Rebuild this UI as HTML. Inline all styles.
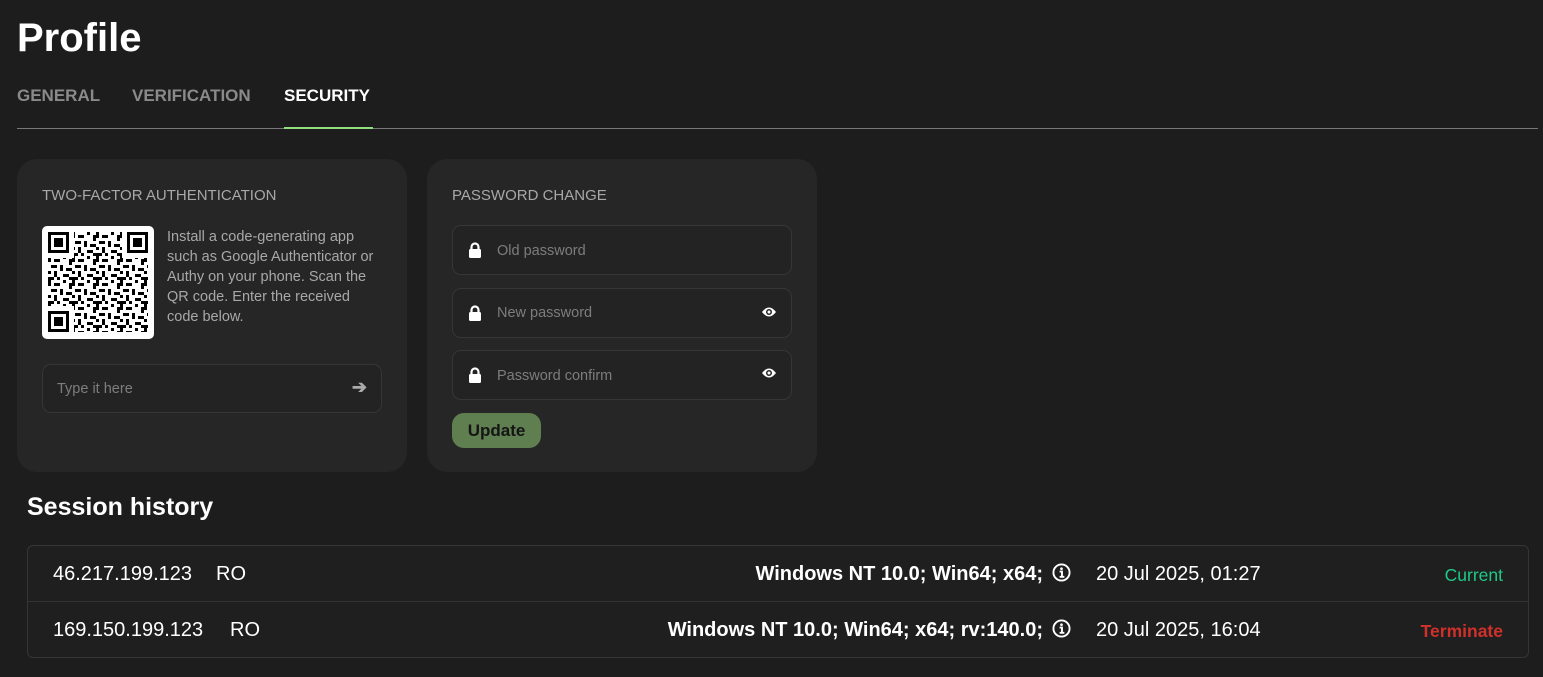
<!DOCTYPE html>
<html><head><meta charset="utf-8"><style>
*{margin:0;padding:0;box-sizing:border-box}
body{width:1543px;height:677px;background:#1d1d1d;font-family:"Liberation Sans",Arial,sans-serif;color:#fff;position:relative;overflow:hidden}
.abs{position:absolute}
h1{position:absolute;left:17px;top:16px;font-size:40px;font-weight:bold}
.tab{position:absolute;top:86px;font-size:17px;font-weight:bold;color:#8a8a8a}
.card{position:absolute;top:159px;width:390px;height:313px;background:#262626;border-radius:20px}
.ch{position:absolute;left:25px;top:28px;font-size:15px;color:#a8a8a8}
.inp{position:absolute;border:1px solid #363636;border-radius:9px;background:#232323}
.ph{position:absolute;font-size:14.5px;color:#7d7d7d}
.row{position:absolute;left:0;right:0;height:56px;font-size:20px}
.row span{position:absolute;top:17px}
</style></head><body>
<h1>Profile</h1>
<div class="tab" style="left:17px">GENERAL</div>
<div class="tab" style="left:132px">VERIFICATION</div>
<div class="tab" style="left:284px;color:#fff">SECURITY</div>
<div class="abs" style="left:17px;top:128px;width:1521px;height:1px;background:#777"></div>
<div class="abs" style="left:284px;top:127px;width:89px;height:2px;background:#8fdf80"></div>

<div class="card" style="left:17px">
<div class="ch">TWO-FACTOR AUTHENTICATION</div>
<div class="abs" style="left:25px;top:67px;width:112px;height:113px;background:#fff;border-radius:5px">
<svg width="112" height="113" viewBox="0 0 112 113">
<defs><pattern id="q" width="24" height="24" patternUnits="userSpaceOnUse" x="6" y="6">
<rect x="0" y="0" width="3" height="6"/><rect x="6" y="3" width="6" height="3"/><rect x="15" y="0" width="3" height="3"/><rect x="21" y="3" width="3" height="6"/>
<rect x="3" y="9" width="6" height="3"/><rect x="12" y="9" width="3" height="6"/><rect x="18" y="12" width="6" height="3"/>
<rect x="0" y="15" width="3" height="3"/><rect x="6" y="15" width="3" height="6"/><rect x="15" y="18" width="6" height="3"/>
<rect x="0" y="21" width="6" height="3"/><rect x="9" y="21" width="3" height="3"/><rect x="21" y="21" width="3" height="3"/><rect x="9" y="3" width="3" height="3"/>
</pattern></defs>
<rect x="6" y="6" width="100" height="100" fill="url(#q)"/>
<g fill="#fff"><rect x="5" y="5" width="27" height="27"/><rect x="80" y="5" width="27" height="27"/><rect x="5" y="80" width="27" height="27"/></g>
<g fill="none" stroke="#000" stroke-width="3"><rect x="7.5" y="7.5" width="18" height="18"/><rect x="86.5" y="7.5" width="18" height="18"/><rect x="7.5" y="86.5" width="18" height="18"/></g>
<g fill="#000"><rect x="12" y="12" width="9" height="9"/><rect x="91" y="12" width="9" height="9"/><rect x="12" y="91" width="9" height="9"/></g>
</svg></div>
<div class="abs" style="left:150px;top:68px;font-size:14.5px;line-height:20px;color:#a8a8a8;width:216px">Install a code-generating app such as Google Authenticator or Authy on your phone. Scan the QR code. Enter the received code below.</div>
<div class="inp" style="left:25px;top:205px;width:340px;height:49px"><div class="ph" style="left:14px;top:16px">Type it here</div><div class="abs" style="right:14px;top:12px;font-size:18px;color:#aaa;font-weight:bold">➔</div></div>
</div>

<div class="card" style="left:427px">
<div class="ch">PASSWORD CHANGE</div>
<div class="inp" style="left:25px;top:66px;width:340px;height:50px"><svg class="abs" style="left:15px;top:16px" width="14" height="16" viewBox="0 0 14 16"><path d="M3.5 8V5a3.5 3.5 0 0 1 7 0v3" fill="none" stroke="#fff" stroke-width="2.2"/><rect x="1" y="7" width="12" height="9" rx="1.5" fill="#fff"/></svg><div class="ph" style="left:44px;top:17px">Old password</div></div>
<div class="inp" style="left:25px;top:129px;width:340px;height:50px"><svg class="abs" style="left:15px;top:16px" width="14" height="16" viewBox="0 0 14 16"><path d="M3.5 8V5a3.5 3.5 0 0 1 7 0v3" fill="none" stroke="#fff" stroke-width="2.2"/><rect x="1" y="7" width="12" height="9" rx="1.5" fill="#fff"/></svg><div class="ph" style="left:44px;top:16px">New password</div><svg class="abs" style="left:308px;top:17px" width="16" height="12" viewBox="0 0 16 12"><path d="M1 6Q8 -3 15 6Q8 15 1 6Z" fill="#fff"/><circle cx="8" cy="6" r="3" fill="#262626"/><circle cx="8" cy="6" r="1.5" fill="#fff"/></svg></div>
<div class="inp" style="left:25px;top:191px;width:340px;height:50px"><svg class="abs" style="left:15px;top:16px" width="14" height="16" viewBox="0 0 14 16"><path d="M3.5 8V5a3.5 3.5 0 0 1 7 0v3" fill="none" stroke="#fff" stroke-width="2.2"/><rect x="1" y="7" width="12" height="9" rx="1.5" fill="#fff"/></svg><div class="ph" style="left:44px;top:17px">Password confirm</div><svg class="abs" style="left:308px;top:16px" width="16" height="12" viewBox="0 0 16 12"><path d="M1 6Q8 -3 15 6Q8 15 1 6Z" fill="#fff"/><circle cx="8" cy="6" r="3" fill="#262626"/><circle cx="8" cy="6" r="1.5" fill="#fff"/></svg></div>
<div class="abs" style="left:25px;top:254px;width:89px;height:35px;background:#5f7f50;border-radius:12px;color:#151515;font-weight:bold;font-size:17px;text-align:center;line-height:35px">Update</div>
</div>

<div class="abs" style="left:27px;top:493px;font-size:25px;font-weight:bold">Session history</div>
<div class="abs" style="left:27px;top:545px;width:1502px;height:113px;border:1px solid #353535;border-radius:6px;background:#1f1f1f">
<div class="row" style="top:0;border-bottom:1px solid #333">
<span style="left:25px">46.217.199.123</span><span style="left:188px">RO</span>
<span style="right:485px;font-weight:bold">Windows NT 10.0; Win64; x64;</span>
<svg class="abs" style="left:1024px;top:17px" width="19" height="19" viewBox="0 0 20 20"><circle cx="10" cy="10" r="8.5" fill="none" stroke="#fff" stroke-width="2"/><circle cx="10" cy="6" r="1.4" fill="#fff"/><path d="M8 9h2.5v5M8 14.5h5" stroke="#fff" stroke-width="2" fill="none"/></svg>
<span style="left:1068px">20 Jul 2025, 01:27</span>
<span style="right:25px;color:#1fc98a;font-size:17.5px;top:19px">Current</span></div>
<div class="row" style="top:56px">
<span style="left:25px">169.150.199.123</span><span style="left:202px">RO</span>
<span style="right:485px;font-weight:bold">Windows NT 10.0; Win64; x64; rv:140.0;</span>
<svg class="abs" style="left:1024px;top:17px" width="19" height="19" viewBox="0 0 20 20"><circle cx="10" cy="10" r="8.5" fill="none" stroke="#fff" stroke-width="2"/><circle cx="10" cy="6" r="1.4" fill="#fff"/><path d="M8 9h2.5v5M8 14.5h5" stroke="#fff" stroke-width="2" fill="none"/></svg>
<span style="left:1068px">20 Jul 2025, 16:04</span>
<span style="right:25px;color:#d0302a;font-size:17.5px;font-weight:bold;top:19px">Terminate</span></div>
</div>
</body></html>
